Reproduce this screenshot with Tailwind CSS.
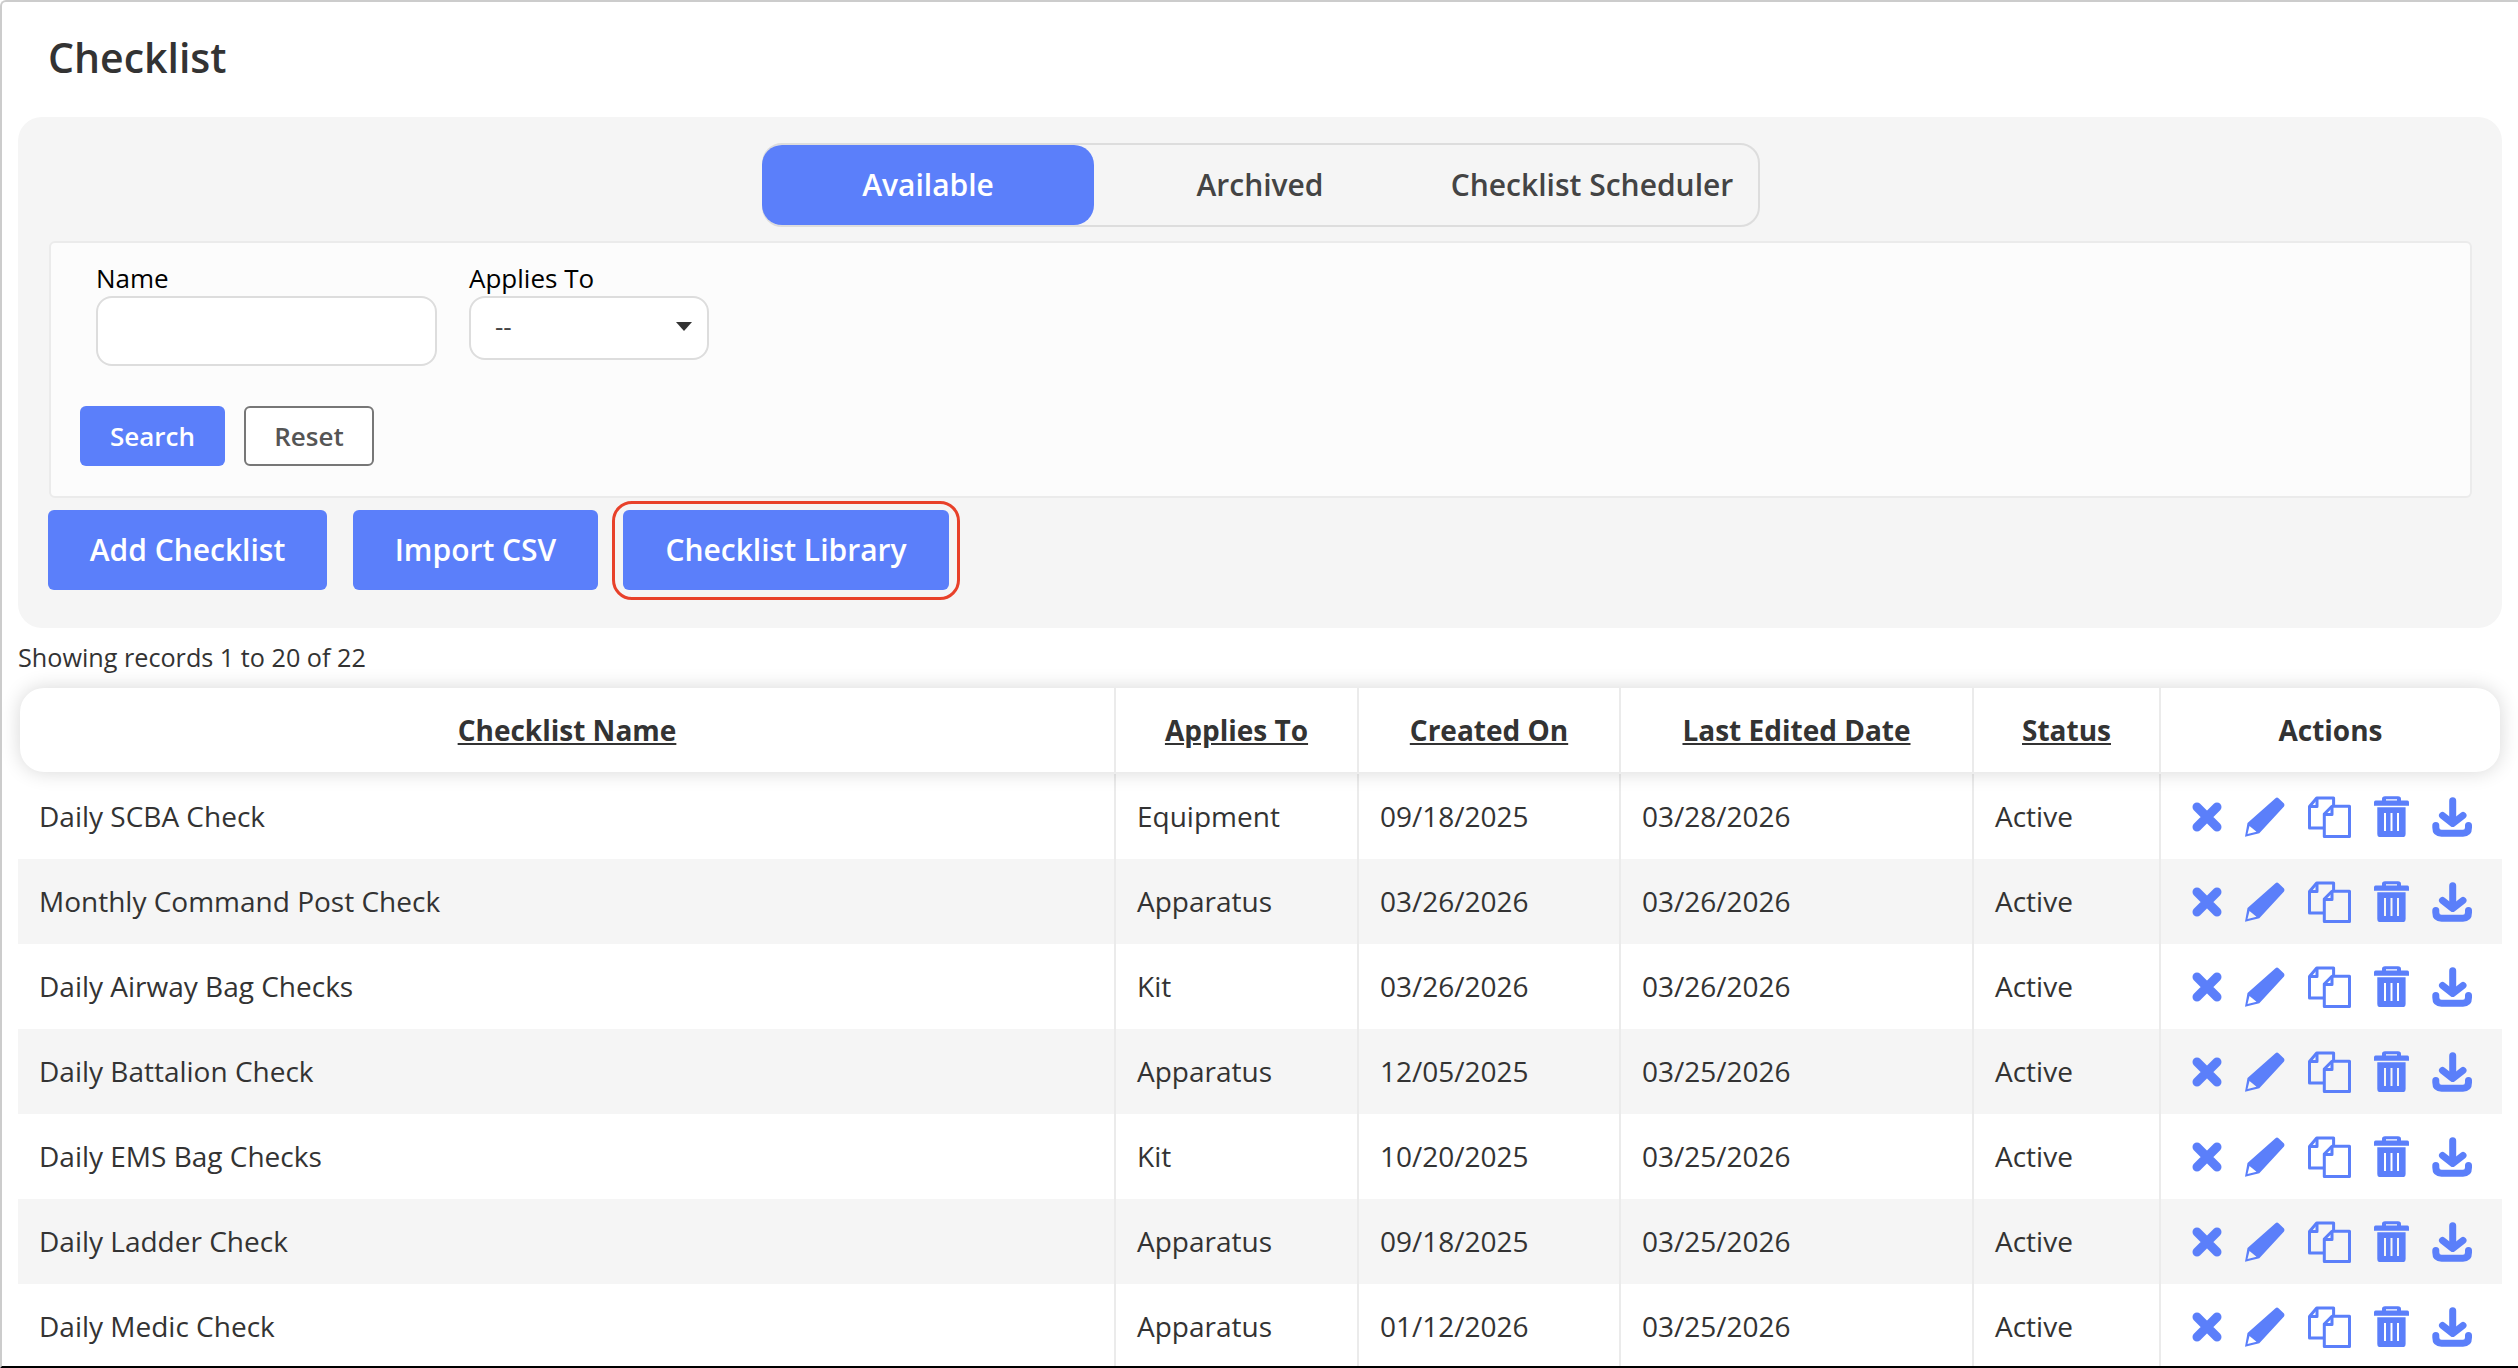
<!DOCTYPE html>
<html lang="en">
<head>
<meta charset="UTF-8">
<meta name="viewport" content="width=device-width, initial-scale=1.0">
<title>Checklist</title>
<script src="https://cdn.jsdelivr.net/npm/@tailwindcss/browser@4"></script>
</head>
<body class="bg-white font-['Open_Sans',sans-serif] text-[#333]">
<svg class="hidden">
  <symbol id="i-x" viewBox="0 0 30 30"><path d="M5 5L25 25M25 5L5 25" fill="none" stroke="currentColor" stroke-width="9" stroke-linecap="round"/></symbol>
  <symbol id="i-edit" viewBox="0 0 40 40"><path fill="currentColor" fill-rule="evenodd" d="M2.5 26L30.5 1.2Q32 0 33.5 1.2L39 6.5Q40 8 39 9.5L14.3 36.3L0 39.7ZM4.5 29L11.5 34.7L2.5 37Z"/></symbol>
  <symbol id="i-copy" viewBox="0 0 43 42"><g fill="none" stroke="currentColor" stroke-width="3" stroke-linejoin="round"><path d="M15 32H1.5V10.5L8.7 2H25.6V9.5"/><path d="M9 2.5V10.5H1.5"/><path d="M24 10.3H41.5V40.5H16.3V18Z"/><path d="M24 10.5V18.5H16.3"/></g></symbol>
  <symbol id="i-trash" viewBox="0 0 35 41"><path fill="currentColor" fill-rule="evenodd" d="M8 4.5V3Q8 .3 11 .3H24Q27 .3 27 3V4.5H33.5Q35 4.5 35 6.5V9.7H0V6.5Q0 4.5 1.5 4.5ZM12 3.2V4.5H23V3.2ZM3.3 11.3H31.6V38Q31.6 41.3 28.3 41.3H6.6Q3.3 41.3 3.3 38ZM10 17V35H12V17ZM16.5 17V35H18.5V17ZM23 17V35H25V17Z"/></symbol>
  <symbol id="i-download" viewBox="0 0 40 40"><g fill="none" stroke="currentColor" stroke-width="7" stroke-linecap="round" stroke-linejoin="round"><path d="M20.7 3.8V25"/><path d="M10.5 18.5L20.7 26.5L31 18.5"/><path d="M3.8 28.5V30.5Q3.8 36.2 9.5 36.2H31Q36.5 36.2 36.5 30.5V28.5"/></g></symbol>
</svg>

<div class="h-[1368px] overflow-hidden border-t-2 border-l-2 border-b-2 border-t-[#ccc] border-l-[#ccc] border-b-black rounded-tl-[6px]">
  <h1 class="h-[115px] pt-[28px] pl-[46px] text-[41px] leading-[54px] font-semibold">Checklist</h1>

  <section class="ml-[16px] w-[2484px] h-[511px] rounded-[24px] bg-[#f5f5f5] pt-[26px]">
    <div class="flex justify-center pl-[2px]">
      <div class="flex h-[84px] w-[998px] rounded-[20px] border-2 border-[#ddd] text-[30px] font-semibold text-[#444]">
        <button class="-ml-[2px] w-[332px] rounded-[20px] bg-[#5b7ffa] pb-[2px] text-white">Available</button>
        <button class="w-[332px] pb-[2px]">Archived</button>
        <button class="w-[332px] pb-[2px]">Checklist Scheduler</button>
      </div>
    </div>

    <form class="mt-[14px] ml-[31px] h-[257px] w-[2423px] rounded-[6px] border-2 border-[#ebebeb] bg-[#fcfcfc] pt-[18px]">
      <div class="flex items-start gap-[32px] pl-[45px] text-[26px] leading-[35px] text-black">
        <label class="flex flex-col">Name
          <input type="text" class="h-[70px] w-[341px] rounded-[16px] border-2 border-[#ddd] bg-white">
        </label>
        <label class="relative flex flex-col">Applies To
          <select class="h-[64px] w-[240px] appearance-none rounded-[16px] border-2 border-[#ddd] bg-white pb-[3px] pl-[24px] text-[26px] text-[#444]">
            <option>--</option>
          </select>
          <svg class="absolute left-[207px] top-[61px] h-[9px] w-[16px]" viewBox="0 0 16 9"><path d="M0 0H16L8 9Z" fill="#333"/></svg>
        </label>
      </div>
      <div class="mt-[40px] flex gap-[19px] pl-[29px] text-[26px] font-semibold">
        <button type="button" class="h-[60px] w-[145px] rounded-[6px] bg-[#5b7ffa] text-white">Search</button>
        <button type="button" class="h-[60px] w-[130px] rounded-[6px] border-2 border-[#777] bg-white text-[#555]">Reset</button>
      </div>
    </form>

    <div class="mt-[12px] ml-[30px] flex text-[30px] font-semibold text-white">
      <button class="h-[80px] w-[279px] rounded-[6px] bg-[#5b7ffa] pb-[2px]">Add Checklist</button>
      <button class="ml-[26px] h-[80px] w-[245px] rounded-[6px] bg-[#5b7ffa] pb-[2px]">Import CSV</button>
      <div class="relative ml-[25px]">
        <button class="h-[80px] w-[326px] rounded-[6px] bg-[#5b7ffa] pb-[2px]">Checklist Library</button>
        <span class="absolute -left-[11px] -right-[11px] -top-[9px] -bottom-[10px] rounded-[20px] border-[3px] border-[#e8412a]"></span>
      </div>
    </div>
  </section>

  <p class="mt-[11px] ml-[16px] text-[25.2px] leading-[36px]">Showing records 1 to 20 of 22</p>

  <div class="relative z-10 mt-[13px] ml-[18px] grid h-[84px] w-[2480px] grid-cols-[1094px_243px_262px_353px_187px_341px] rounded-[24px] bg-white text-center text-[28px] font-bold shadow-[0_0_20px_rgba(0,0,0,0.16)]">
    <div class="flex items-center justify-center"><span class="underline">Checklist Name</span></div>
    <div class="flex items-center justify-center border-l-2 border-[#ebebeb]"><span class="underline">Applies To</span></div>
    <div class="flex items-center justify-center border-l-2 border-[#ebebeb]"><span class="underline">Created On</span></div>
    <div class="flex items-center justify-center border-l-2 border-[#ebebeb]"><span class="underline">Last Edited Date</span></div>
    <div class="flex items-center justify-center border-l-2 border-[#ebebeb]"><span class="underline">Status</span></div>
    <div class="flex items-center justify-center border-l-2 border-[#ebebeb]">Actions</div>
  </div>

  <div class="mt-[2px] ml-[16px] w-[2484px] text-[28px]">
    <!-- rows -->
    <div class="grid h-[85px] grid-cols-[1096px_243px_262px_353px_187px_343px] items-stretch bg-white">
      <div class="flex items-center pb-[2px] pl-[21px]">Daily SCBA Check</div>
      <div class="flex items-center border-l-2 border-[#ebebeb] pb-[2px] pl-[21px]">Equipment</div>
      <div class="flex items-center border-l-2 border-[#ebebeb] pb-[2px] pl-[21px]">09/18/2025</div>
      <div class="flex items-center border-l-2 border-[#ebebeb] pb-[2px] pl-[21px]">03/28/2026</div>
      <div class="flex items-center border-l-2 border-[#ebebeb] pb-[2px] pl-[21px]">Active</div>
      <div class="flex items-center border-l-2 border-[#ebebeb] pl-[31px] text-[#5b7ffa]">
        <svg class="h-[30px] w-[30px]"><use href="#i-x"/></svg><svg class="ml-[23px] h-[40px] w-[40px]"><use href="#i-edit"/></svg><svg class="ml-[23px] h-[42px] w-[43px]"><use href="#i-copy"/></svg><svg class="ml-[23px] h-[41px] w-[35px]"><use href="#i-trash"/></svg><svg class="ml-[23px] h-[40px] w-[40px]"><use href="#i-download"/></svg>
      </div>
    </div>
    <div class="grid h-[85px] grid-cols-[1096px_243px_262px_353px_187px_343px] items-stretch bg-[#f5f5f5]">
      <div class="flex items-center pb-[2px] pl-[21px]">Monthly Command Post Check</div>
      <div class="flex items-center border-l-2 border-[#ebebeb] pb-[2px] pl-[21px]">Apparatus</div>
      <div class="flex items-center border-l-2 border-[#ebebeb] pb-[2px] pl-[21px]">03/26/2026</div>
      <div class="flex items-center border-l-2 border-[#ebebeb] pb-[2px] pl-[21px]">03/26/2026</div>
      <div class="flex items-center border-l-2 border-[#ebebeb] pb-[2px] pl-[21px]">Active</div>
      <div class="flex items-center border-l-2 border-[#ebebeb] pl-[31px] text-[#5b7ffa]">
        <svg class="h-[30px] w-[30px]"><use href="#i-x"/></svg><svg class="ml-[23px] h-[40px] w-[40px]"><use href="#i-edit"/></svg><svg class="ml-[23px] h-[42px] w-[43px]"><use href="#i-copy"/></svg><svg class="ml-[23px] h-[41px] w-[35px]"><use href="#i-trash"/></svg><svg class="ml-[23px] h-[40px] w-[40px]"><use href="#i-download"/></svg>
      </div>
    </div>
    <div class="grid h-[85px] grid-cols-[1096px_243px_262px_353px_187px_343px] items-stretch bg-white">
      <div class="flex items-center pb-[2px] pl-[21px]">Daily Airway Bag Checks</div>
      <div class="flex items-center border-l-2 border-[#ebebeb] pb-[2px] pl-[21px]">Kit</div>
      <div class="flex items-center border-l-2 border-[#ebebeb] pb-[2px] pl-[21px]">03/26/2026</div>
      <div class="flex items-center border-l-2 border-[#ebebeb] pb-[2px] pl-[21px]">03/26/2026</div>
      <div class="flex items-center border-l-2 border-[#ebebeb] pb-[2px] pl-[21px]">Active</div>
      <div class="flex items-center border-l-2 border-[#ebebeb] pl-[31px] text-[#5b7ffa]">
        <svg class="h-[30px] w-[30px]"><use href="#i-x"/></svg><svg class="ml-[23px] h-[40px] w-[40px]"><use href="#i-edit"/></svg><svg class="ml-[23px] h-[42px] w-[43px]"><use href="#i-copy"/></svg><svg class="ml-[23px] h-[41px] w-[35px]"><use href="#i-trash"/></svg><svg class="ml-[23px] h-[40px] w-[40px]"><use href="#i-download"/></svg>
      </div>
    </div>
    <div class="grid h-[85px] grid-cols-[1096px_243px_262px_353px_187px_343px] items-stretch bg-[#f5f5f5]">
      <div class="flex items-center pb-[2px] pl-[21px]">Daily Battalion Check</div>
      <div class="flex items-center border-l-2 border-[#ebebeb] pb-[2px] pl-[21px]">Apparatus</div>
      <div class="flex items-center border-l-2 border-[#ebebeb] pb-[2px] pl-[21px]">12/05/2025</div>
      <div class="flex items-center border-l-2 border-[#ebebeb] pb-[2px] pl-[21px]">03/25/2026</div>
      <div class="flex items-center border-l-2 border-[#ebebeb] pb-[2px] pl-[21px]">Active</div>
      <div class="flex items-center border-l-2 border-[#ebebeb] pl-[31px] text-[#5b7ffa]">
        <svg class="h-[30px] w-[30px]"><use href="#i-x"/></svg><svg class="ml-[23px] h-[40px] w-[40px]"><use href="#i-edit"/></svg><svg class="ml-[23px] h-[42px] w-[43px]"><use href="#i-copy"/></svg><svg class="ml-[23px] h-[41px] w-[35px]"><use href="#i-trash"/></svg><svg class="ml-[23px] h-[40px] w-[40px]"><use href="#i-download"/></svg>
      </div>
    </div>
    <div class="grid h-[85px] grid-cols-[1096px_243px_262px_353px_187px_343px] items-stretch bg-white">
      <div class="flex items-center pb-[2px] pl-[21px]">Daily EMS Bag Checks</div>
      <div class="flex items-center border-l-2 border-[#ebebeb] pb-[2px] pl-[21px]">Kit</div>
      <div class="flex items-center border-l-2 border-[#ebebeb] pb-[2px] pl-[21px]">10/20/2025</div>
      <div class="flex items-center border-l-2 border-[#ebebeb] pb-[2px] pl-[21px]">03/25/2026</div>
      <div class="flex items-center border-l-2 border-[#ebebeb] pb-[2px] pl-[21px]">Active</div>
      <div class="flex items-center border-l-2 border-[#ebebeb] pl-[31px] text-[#5b7ffa]">
        <svg class="h-[30px] w-[30px]"><use href="#i-x"/></svg><svg class="ml-[23px] h-[40px] w-[40px]"><use href="#i-edit"/></svg><svg class="ml-[23px] h-[42px] w-[43px]"><use href="#i-copy"/></svg><svg class="ml-[23px] h-[41px] w-[35px]"><use href="#i-trash"/></svg><svg class="ml-[23px] h-[40px] w-[40px]"><use href="#i-download"/></svg>
      </div>
    </div>
    <div class="grid h-[85px] grid-cols-[1096px_243px_262px_353px_187px_343px] items-stretch bg-[#f5f5f5]">
      <div class="flex items-center pb-[2px] pl-[21px]">Daily Ladder Check</div>
      <div class="flex items-center border-l-2 border-[#ebebeb] pb-[2px] pl-[21px]">Apparatus</div>
      <div class="flex items-center border-l-2 border-[#ebebeb] pb-[2px] pl-[21px]">09/18/2025</div>
      <div class="flex items-center border-l-2 border-[#ebebeb] pb-[2px] pl-[21px]">03/25/2026</div>
      <div class="flex items-center border-l-2 border-[#ebebeb] pb-[2px] pl-[21px]">Active</div>
      <div class="flex items-center border-l-2 border-[#ebebeb] pl-[31px] text-[#5b7ffa]">
        <svg class="h-[30px] w-[30px]"><use href="#i-x"/></svg><svg class="ml-[23px] h-[40px] w-[40px]"><use href="#i-edit"/></svg><svg class="ml-[23px] h-[42px] w-[43px]"><use href="#i-copy"/></svg><svg class="ml-[23px] h-[41px] w-[35px]"><use href="#i-trash"/></svg><svg class="ml-[23px] h-[40px] w-[40px]"><use href="#i-download"/></svg>
      </div>
    </div>
    <div class="grid h-[85px] grid-cols-[1096px_243px_262px_353px_187px_343px] items-stretch bg-white">
      <div class="flex items-center pb-[2px] pl-[21px]">Daily Medic Check</div>
      <div class="flex items-center border-l-2 border-[#ebebeb] pb-[2px] pl-[21px]">Apparatus</div>
      <div class="flex items-center border-l-2 border-[#ebebeb] pb-[2px] pl-[21px]">01/12/2026</div>
      <div class="flex items-center border-l-2 border-[#ebebeb] pb-[2px] pl-[21px]">03/25/2026</div>
      <div class="flex items-center border-l-2 border-[#ebebeb] pb-[2px] pl-[21px]">Active</div>
      <div class="flex items-center border-l-2 border-[#ebebeb] pl-[31px] text-[#5b7ffa]">
        <svg class="h-[30px] w-[30px]"><use href="#i-x"/></svg><svg class="ml-[23px] h-[40px] w-[40px]"><use href="#i-edit"/></svg><svg class="ml-[23px] h-[42px] w-[43px]"><use href="#i-copy"/></svg><svg class="ml-[23px] h-[41px] w-[35px]"><use href="#i-trash"/></svg><svg class="ml-[23px] h-[40px] w-[40px]"><use href="#i-download"/></svg>
      </div>
    </div>
  </div>
</div>
</body>
</html>
